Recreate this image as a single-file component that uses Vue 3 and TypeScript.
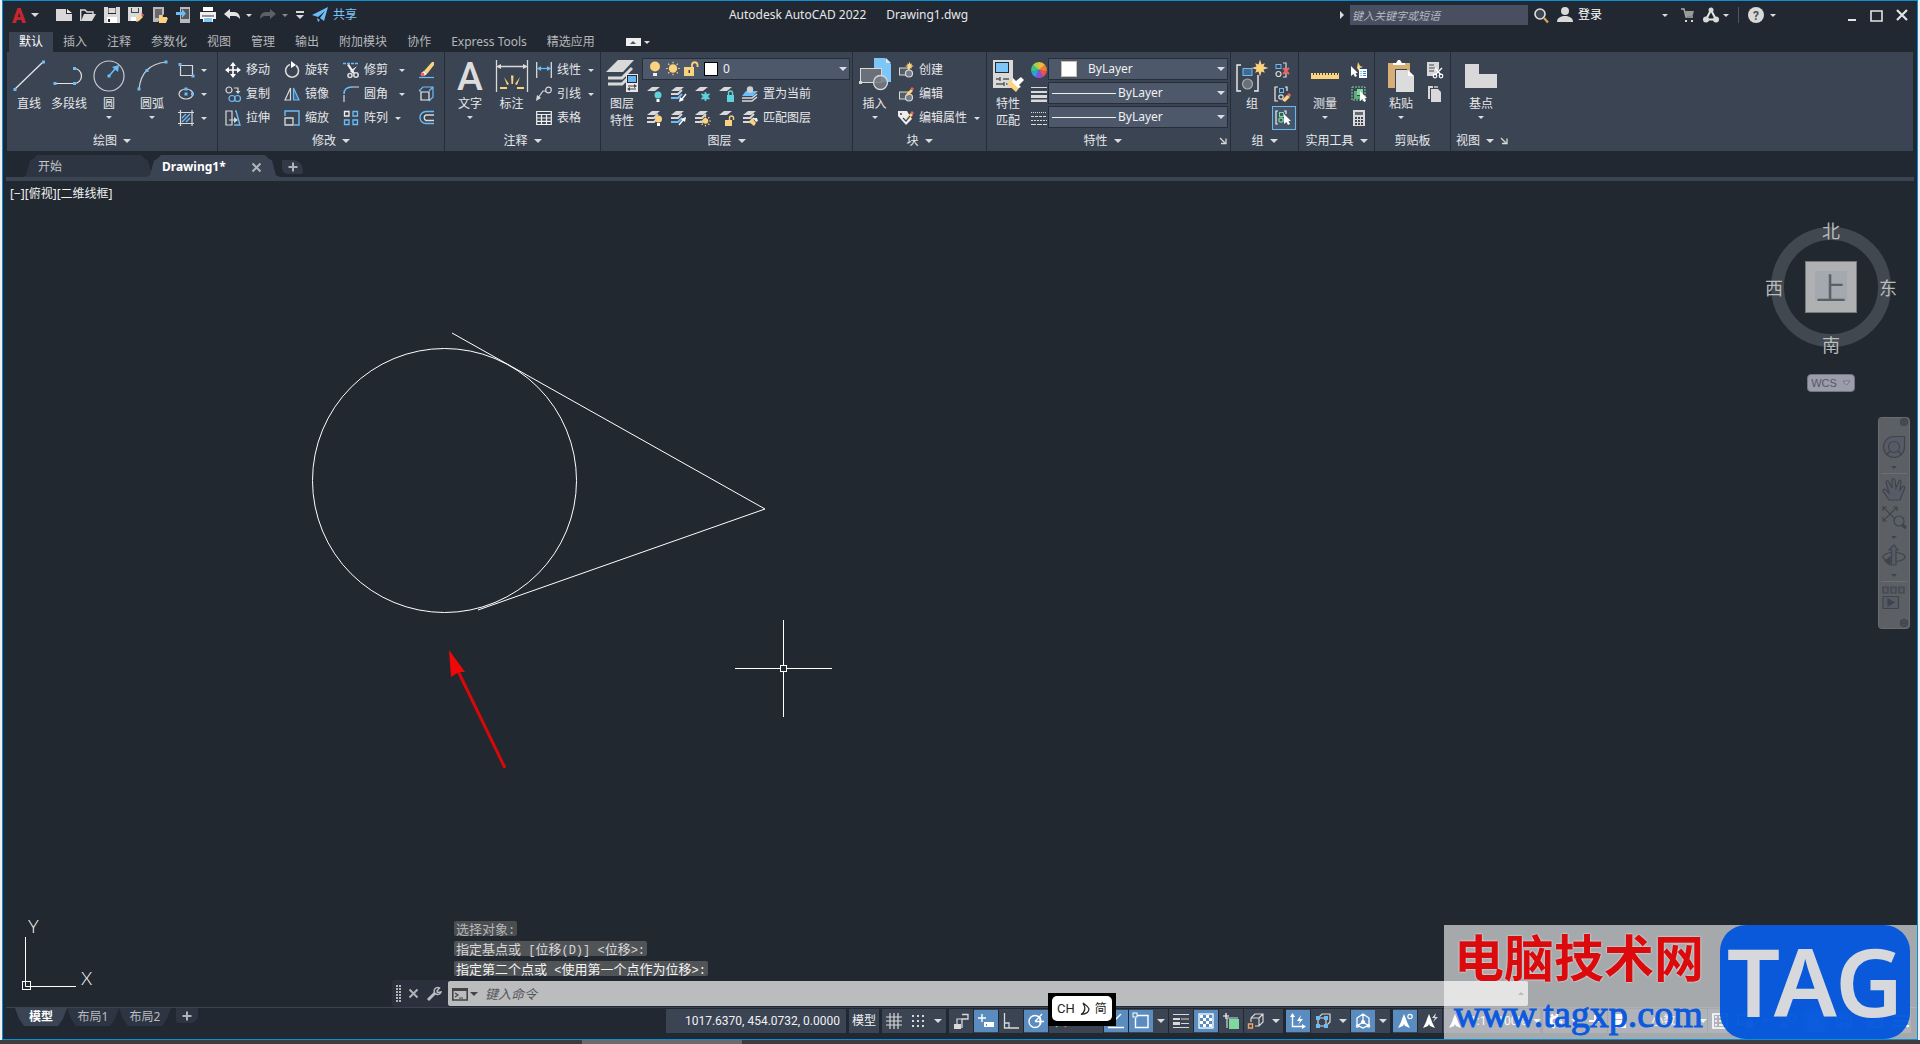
<script setup lang="ts">
import { h, ref } from 'vue'

interface Cmd { icon: string; label?: string; caret?: boolean; far?: boolean; on?: boolean }
interface Big { icon: string; label: string; second?: string; w: number; caret?: boolean }
interface Panel {
  title: string; w: number; pad: number; caret?: boolean; launcher?: boolean
  big: Big[]; cols: { w: number; items: Cmd[] }[]; kind?: 'layers' | 'props'
}
interface Status { icon?: string; icon2?: string; text?: string; w: number; caret?: boolean; on?: boolean }

const W = '#d9d9d9'
const B = '#6cbdf7'
const Y = '#fbd27d'
const G = '#7fd8a0'
const T = '#5fd3dc'

const sq = (x: number, y: number) => `<rect x="${x - 1.5}" y="${y - 1.5}" width="3" height="3" fill="${B}"/>`
const st = (d: string, c = W, w = 1.2) => `<path d="${d}" fill="none" stroke="${c}" stroke-width="${w}"/>`
const fl = (d: string, c = W) => `<path d="${d}" fill="${c}"/>`
const circ = (x: number, y: number, r: number, c = W, f = 'none', w = 1.2) =>
  `<circle cx="${x}" cy="${y}" r="${r}" fill="${f}" stroke="${c}" stroke-width="${w}"/>`
const sheet = (y: number, c = W) => fl(`M6 ${y}H14L9 ${y + 4}H1Z`, c)
const stack = (c = W) => sheet(1) + st('M1 8H8L12 4', W, 1.8) + st('M1 12H8L12 8', c, 1.8)
const pencil = fl('M8 10L9 7L13 3L15 5L11 9Z', Y) + fl('M12.500 2.500L14 1L16 3L14.500 4.500Z', '#f26060')
const blockBase = `<rect x="1.500" y="6" width="9" height="7" fill="#555c68" stroke="${W}"/>` + circ(11, 11.5, 3.5, W, '#767c86')
const star = (x: number, y: number, r: number) => {
  const p: string[] = []
  for (let i = 0; i < 16; i++) {
    const a = (i * Math.PI) / 8
    const k = i % 2 ? r * 0.45 : i % 4 ? r * 0.8 : r
    p.push(`${(x + k * Math.sin(a)).toFixed(1)},${(y - k * Math.cos(a)).toFixed(1)}`)
  }
  return `<polygon points="${p.join(' ')}" fill="${Y}"/>`
}
const sun = (x: number, y: number, r: number) => {
  let s = `<circle cx="${x}" cy="${y}" r="${r}" fill="${Y}"/>`
  for (let i = 0; i < 8; i++) {
    const a = (i * Math.PI) / 4
    s += st(`M${x + (r + 1) * Math.cos(a)} ${y + (r + 1) * Math.sin(a)}L${x + (r + 2.6) * Math.cos(a)} ${y + (r + 2.6) * Math.sin(a)}`, Y, 1.2)
  }
  return s
}
const wheel = () => {
  const c = ['#f5b73a', '#f07a3c', '#e8505b', '#8a4fe0', '#29a3dc', '#3cc28a', '#a9cf4d']
  return c.map((k, i) => {
    const a = (i * 2 * Math.PI) / 7
    const b = ((i + 1) * 2 * Math.PI) / 7
    return fl(`M8 8L${8 + 8 * Math.sin(a)} ${8 - 8 * Math.cos(a)}A8 8 0 0 1 ${8 + 8 * Math.sin(b)} ${8 - 8 * Math.cos(b)}Z`, k)
  }).join('')
}
const checker = () => {
  let s = `<rect x="1" y="1" width="14" height="14" fill="none" stroke="#fff" stroke-width="1.300"/>`
  for (let r = 0; r < 4; r++) for (let c = 0; c < 4; c++) if ((r + c) % 2 === 0) s += `<rect x="${2 + c * 3}" y="${2 + r * 3}" width="3" height="3" fill="#fff"/>`
  return s
}
const dots = () => {
  let s = ''
  for (let r = 0; r < 3; r++) for (let c = 0; c < 3; c++) s += `<rect x="${2 + c * 5}" y="${2 + r * 5}" width="2" height="2" fill="${W}"/>`
  return s
}
const cursor = (x: number, y: number) => fl(`M${x} ${y}V${y + 10}L${x + 2.5} ${y + 8}L${x + 4} ${y + 11}L${x + 6} ${y + 10}L${x + 4.500} ${y + 7}H${x + 7}Z`, '#fff')
const scalePerson = (x: number) => fl(`M${x} 1L${x + 2} 6L${x + 3} 9L${x + 6} 15L${x + 1} 13L${x} 11L${x - 1} 13L${x - 6} 15L${x - 3} 9L${x - 2} 6Z`, '#fff')

const icons: Record<string, string> = {
  logo: `<text x="1" y="16" font-family="Roboto, sans-serif" font-weight="900" font-size="20" fill="#c8262e">A</text>`,
  fileNew: fl('M0 2H10V7H16V14H0Z') + fl('M11 2L16 6H11Z', '#eee'),
  open: st('M.7 14V3H5L7 5H13V7', W, 1.4) + fl('M4 7H16L12 14H1Z'),
  save: fl('M0 0H16V16H0Z') + `<rect x="4" y="0" width="8" height="7" fill="#23292f"/><rect x="4.500" y="1" width="7" height="5" fill="${W}"/><rect x="3" y="10" width="10" height="6" fill="#fff"/><rect x="4" y="12" width="2" height="3" fill="#23292f"/>`,
  saveAs: fl('M0 0H14V8L9 14H0Z') + `<rect x="3" y="1" width="8" height="5" fill="#444"/><rect x="4" y="1" width="6" height="4" fill="${W}"/><rect x="3" y="10" width="5" height="4" fill="#fff"/>` + fl('M8 15L9 12L13 8L15 10L11 14Z', Y) + fl('M13 7L14 6L16 8L15 9.500Z', '#f26060'),
  openWeb: fl('M1 0H12V7L6 15H1Z', '#b9b9b9') + fl('M3 2H10V11H3Z', '#66696d') + fl('M7 8H10L11 10H15V11L16 11L14 16H7Z', Y),
  saveWeb: fl('M4 0H14V16H4Z', '#b9b9b9') + fl('M5 2H13V12H5Z', '#55595e') + fl('M0 5H6V2L10 6.500L6 11V8H0Z', B),
  print: fl('M3 0H13V4H3Z', '#fff') + fl('M0 5H16V12H0Z', '#eee') + fl('M3 9H13V15H3Z', '#fff') + fl('M4 11H12V15H4Z', '#85c7f7') + st('M2 9H14', '#333', 1),
  undo: fl('M0 7L6 2V5H10C14 5 16 8 16 12C14 9.500 12 9 10 9H6V12Z', '#e4e4e4'),
  redo: fl('M16 7L10 2V5H6C2 5 0 8 0 12C2 9.500 4 9 6 9H10V12Z', '#5c6167'),
  custom: fl('M0 4H8V6H0Z') + fl('M0 8H8L4 12Z'),
  plane: fl('M16 0L12 14L8 11L13 4L6 10L0 8Z', B) + fl('M5 11L8 13L6 15Z', B),
  search: circ(6, 6, 5, '#e0e0e0', '#3f4650', 1.6) + st('M10 10L14 14.500', '#d9a55f', 2.2),
  user: circ(8, 4, 4, W, W, 0) + fl('M0 15C0 11 3 10 6 9H10C13 10 16 11 16 15Z'),
  cart: st('M0 2H3L5 10H12', '#aaa', 1.4) + fl('M4 4H13L11.500 9H5Z', '#9a9a9a') + fl('M4 13H6V15H4ZM10 13H12V15H10Z'),
  app: st('M8 3L3 12.500L13 12.500Z', '#e4e4e4', 2) + circ(8, 3, 2.5, W, W, 0) + circ(3, 12.5, 3, W, W, 0) + circ(13, 12.5, 3, W, W, 0),
  help: circ(8, 8, 8, W, W, 0) + `<text x="8" y="12.500" text-anchor="middle" font-family="Roboto, sans-serif" font-weight="700" font-size="12" fill="#4a4f57">?</text>`,
  line: st('M2 29L30 2', '#e4e4e4', 1.3) + sq(2, 29.5) + sq(30.5, 2),
  poly: st('M2 23.500H21M21 8.500A7.500 7.500 0 0 1 21 23.500', '#e4e4e4') + sq(2, 23.5) + sq(21.5, 23.5) + sq(21.5, 8.5),
  circle: circ(16, 16, 15, '#c9ccd0') + st('M16 16L22 9', B, 1.6) + fl('M26 5L25 12L19 7Z', B) + sq(16, 16),
  arc: st('M3 29C4 20 6 15 11 10S21 3 30 2', '#c9ccd0') + sq(3, 29) + sq(11, 10.5) + sq(30, 2),
  rect: st('M3 3.500H14.500V13.500H2.500V4', W, 1.2) + sq(2, 2.5) + sq(15, 14),
  ellipse: `<ellipse cx="8" cy="8" rx="7" ry="5" fill="none" stroke="${W}" stroke-width="1.200"/>` + sq(8, 8) + sq(8, 3) + sq(14.5, 8),
  hatch: st('M2.500 0V16M14 0V16M0 2.500H16M0 13.500H16') + st('M4 8L8 4M4 12L12 4M8 12L12 8', B, 1.4),
  move: st('M8 2V14M2 8H14', '#fff', 1.6) + fl('M8 0L11 4H5ZM8 16L11 12H5ZM0 8L4 5V11ZM16 8L12 5V11Z', '#fff'),
  rotate: st('M6 2.500A6.500 6.500 0 1 0 12 3.500', W, 1.6) + fl('M7 -1L12 3L7 6Z', '#fff'),
  trim: `<path d="M0 1.500H16" stroke="${B}" stroke-width="1.500" stroke-dasharray="3 1"/>` + fl('M4 3L6 2L12 11L10 12ZM14 4L9 11L7 9Z', '#eee') + circ(13, 13, 2.2, W, 'none', 1.6) + circ(7, 13.5, 2, W, 'none', 1.6),
  copy: circ(4, 4, 3) + st('M9 2H13V5') + fl('M10.500 5H15.500L13 8Z') + circ(7, 12.5, 3, B) + circ(12.5, 12.5, 3, B),
  mirror: st('M6.500 2V14H1Z', W) + `<path d="M9.500 2V14H15Z" fill="#46688c" stroke="${B}" stroke-width="1.200"/>`,
  fillet: st('M1 16V9M9 1H16', W) + st('M1 8C1 3 4 1 9 1', B, 1.4),
  stretch: st('M1 1H7V15H1ZM4 10H10', W) + fl('M9 7L13 10L9 13Z') + st('M10 1H11L15 15H9', B, 1.4),
  scale: st('M1 6V1H15V15H10', B, 1.4) + st('M1 8H9V15H1Z', W, 1.3),
  array: st('M1.500 1.500H6V6H1.500Z', '#eee', 1.3) + st('M10 1.500H14.500V6H10ZM1.500 10H6V14.500H1.500ZM10 10H14.500V14.500H10Z', B, 1.3),
  erase: st('M1 15.500H16', B, 1.2) + fl('M6 9L14 0H16V3L9 12Z', Y) + fl('M3 11L6 9L9 12L6 14Z', '#fff') + circ(4.5, 12.5, 2, '#f26060', '#f26060', 0),
  explode: st('M1 5L5 1H15V11L11 15M1 5H3M11 5L15 1', B) + st('M3 6H11V14H3Z', '#eee'),
  offset: st('M16 1.500H8A6 6 0 0 0 8 13.500H16', B, 1.4) + st('M16 5H8A3 3 0 0 0 8 10.500H16', W, 1.4),
  text: `<text x="16" y="30" text-anchor="middle" font-family="Roboto, sans-serif" font-weight="500" font-size="39" fill="#dcdcdc">A</text>`,
  dim: st('M.5 0V32M31.500 0V32M2 6.500H30', W, 1.3) + fl('M0 6.500L5 4V9ZM32 6.500L27 4V9Z') + fl('M15 15.500H17.500L17 24H15.500ZM8 17L13 24L11 25ZM24 17L19 24L21 25ZM4 29L4 27L11 27V29ZM28 29V27L21 27V29Z', Y),
  linear: st('M.7 0V16M15.300 0V16', W, 1.3) + st('M2 6.500H14', B) + fl('M1 6.500L5 4V9ZM15 6.500L11 4V9Z', B),
  leader: circ(12.5, 4, 2.8) + st('M10 5H7L2 12') + fl('M0 15L1 9L5 12Z'),
  table: st('M.7 1.500H15.300V14.500H.7ZM.7 4.500H15.300M.7 8H15.300M.7 11.300H15.300M5.500 4.500V14.500M10.500 4.500V14.500', '#eee'),
  layerProps: fl('M12 0H28L17 12H0Z') + st('M2 18H16L26 8', W, 3) + st('M2 24H16L24 16', W, 3) + `<rect x="20" y="14" width="12" height="18" fill="#e8e8e8"/><rect x="21.500" y="15.500" width="9" height="7" fill="#66b6f3" stroke="#23292f"/>` + st('M22 26H29M30 29H23', '#444') + fl('M28 24L31 26L28 28ZM24 27V31L21 29Z', '#444'),
  l1: sheet(1) + circ(12, 9, 3.5, T, T, 0) + fl('M10.500 13H13.500V16H10.500Z', '#fff'),
  l2: stack(B) + st('M16 8L12 13', '#fff', 1.4) + fl('M9 16L10 11L14 14Z', '#fff'),
  l3: sheet(1) + st('M11.500 6V15M7.500 8L15.500 13M15.500 8L7.500 13', T, 1.6) + circ(11.5, 10.5, 2.5, T),
  l4: sheet(1) + fl('M9 9H16V16H9Z', T) + st('M10.500 9V7A2 2 0 0 1 14.500 7V9', T, 1.4),
  l5: fl('M4 5H16L11 10H0Z', B) + st('M0 12H10L15 8M0 15H10L15 11', W, 1.6) + circ(8, 3.5, 3.2, W, '#cfcfcf', 0),
  l6: stack() + circ(12.5, 9, 3.5, Y, Y, 0) + fl('M11 13H14V16H11Z', '#fff'),
  l7: stack(B) + st('M9 15L13 10', '#fff', 1.4) + fl('M16 7L15 12L11 9Z', '#fff'),
  l8: stack() + sun(11.5, 11, 2.8),
  l9: sheet(1) + fl('M7 10H14V16H7Z', Y) + st('M11.500 10V8A2 2 0 0 1 15.500 8V10', Y, 1.4),
  l10: stack() + fl('M7 12L10 8L14 13L12 16Z', Y) + fl('M11 8L15 8L16 11L14 12Z', '#eee'),
  bulb: circ(8, 5.5, 5, Y, Y, 0) + fl('M6 12H10V15H6Z', '#eee'),
  sun: sun(8, 7.5, 4.2),
  unlock: fl('M1 6H11V15H1Z', Y) + st('M9 6V3.500A2.800 2.800 0 0 1 14.500 3.500V6', Y, 1.8) + fl('M5.500 9H7V12H5.500Z', '#3b4453'),
  insert: fl('M15 -2H26L32 4V22H15Z', '#7cc6f8') + fl('M27 -2L32 3H27Z', '#cfe8fb') + `<rect x="1.500" y="8.500" width="21" height="14" fill="#6a707a" stroke="${W}"/>` + circ(21.5, 22.5, 7, W, 'rgba(120,125,133,.85)', 1.3) + fl('M0 21H3V24H0Z'),
  create: blockBase + star(11.5, 4, 4.5),
  edit: blockBase + pencil,
  attr: fl('M0 1H9L14 9L8 15L0 6Z', '#eee') + circ(3, 4, 1, '#3b4453', '#3b4453', 0) + pencil + st('M5 8L8 11L12 6', '#3b4453', 1.2),
  match: fl('M1 0H21V28H1Z') + `<rect x="3.500" y="2.500" width="13" height="10" fill="#7cc6f8" stroke="#23292f"/>` + st('M4 19H8M11 19H17M4 24H12M14 24H16M8 17V21M12 22V26', '#555', 1.4) + fl('M15 24L20 19L28 27L24 32Z', Y) + fl('M21 18L24 21L29 17L32 20L27 25L29 27L26 28L20 22Z', '#fff'),
  wheel: wheel(),
  lweight: fl('M0 1H16V2H0ZM0 5H16V7H0ZM0 9H16V12H0ZM0 13.500H16V16H0Z'),
  ltype: `<path d="M0 2.500H16" stroke="${W}" stroke-dasharray="1 1"/><path d="M0 6.500H16" stroke="${W}" stroke-dasharray="3 1"/><path d="M0 10.500H16" stroke="${W}" stroke-dasharray="2 1"/><path d="M0 14.500H16" stroke="${W}" stroke-dasharray="5 1"/>`,
  group: st('M5 5H1V31H5M18 31H22V15', '#eee', 1.4) + `<rect x="7" y="8.500" width="9" height="7" fill="#46688c" stroke="${B}"/>` + circ(11.5, 24, 5, '#aaa', '#6a707a') + star(24, 8, 8.5),
  ungroup: `<rect x="1" y="2.500" width="5" height="4" fill="none" stroke="${B}"/>` + circ(3.5, 12, 2.5) + st('M8 1H11V15H8') + st('M8 6L14 12M14 6L8 12', '#f26060', 2),
  groupEdit: st('M3 1H0V15H3M10 1H12V5', '#eee') + `<rect x="4.500" y="2.500" width="4" height="4" fill="none" stroke="${B}"/>` + circ(6, 11, 2.2) + fl('M7 14L12 9L15 11L10 16Z', Y) + fl('M12 9L14 7L16 9L15 11Z', '#f26060'),
  groupSel: st('M3 1H1V14H3M9 1H11V4', '#eee') + `<rect x="4.500" y="2.500" width="4" height="4" fill="none" stroke="${G}"/>` + circ(6, 10, 2.2, G) + cursor(9, 4),
  ruler: `<rect x="2" y="13" width="28" height="6" fill="${Y}"/>` + [4, 7, 10, 13, 16, 19, 22, 25, 28].map(x => `<rect x="${x}" y="13" width="1" height="2" fill="#3b4453"/>`).join(''),
  quick: fl('M7 0L9 4L12 5L9 6L8 9L6 6Z', Y) + cursor(0, 4) + fl('M8 7H16V16H8Z', '#fff') + st('M9.500 9.500H10.500M12 9.500H15M9.500 11.500H10.500M12 11.500H15M9.500 13.500H10.500M12 13.500H15', '#2d8fe0'),
  selAll: `<rect x="1" y="1" width="13" height="13" fill="none" stroke="${G}" stroke-dasharray="2 1"/>` + fl('M3 5H6V10H10V13H3Z', '#5fae80') + fl('M6 3H12V9H6Z', G) + cursor(9, 5),
  calc: fl('M2 0H14V16H2Z') + fl('M4 2H12V5H4Z', '#66696d') + [4, 7, 10].map(x => [7, 10, 13].map(y => `<rect x="${x}" y="${y}" width="2" height="2" fill="#44484e"/>`).join('')).join(''),
  paste: fl('M3 3H25V28H3Z', '#d9ae74') + fl('M8 3H11L13 0H15L17 3H20V5H8Z', '#fff') + fl('M11 10H22L29 16V32H11Z', '#dcdcdc') + st('M10.500 32V9.500H22', '#3b4453', 1) + fl('M23 10L29 16H23Z', '#fff'),
  cut: fl('M0 0H12V7L7 14H0Z') + st('M2 3H7M2 6H8M2 9H7', '#44484e') + st('M8 6L14 13M15 6L8 13', '#fff', 1.4) + circ(14, 14, 1.8, '#fff') + circ(8, 14, 1.8, '#fff'),
  copyClip: fl('M1 0H6V2H3V13H1Z') + fl('M4 3H11L14 6V16H4Z') + fl('M7 0L11 0L11 2H7Z', '#aaa'),
  base: fl('M0 4H14V14H32V28H0Z'),
  launch: st('M1 1L6 6', W, 1.3) + st('M7 1.500V6.500H2', W, 1.3),
  grid: st('M4 0V16M8 0V16M12 0V16M0 4H16M0 8H16M0 12H16'),
  snap: dots(),
  infer: fl('M1 11H8V16H1Z') + st('M9 1.500H15V6H9V15', W, 1.3) + st('M4 11V6H9'),
  dyn: st('M0 5H8M4 1V9', '#fff', 1.4) + fl('M6 9H16V14H6Z', '#fff') + fl('M8 11H9V13H8Z', '#5b8cc0'),
  ortho: st('M1.500 0V15H16M2 10H6V15', W, 1.3),
  polar: circ(7, 8.5, 6, '#fff', 'none', 1.4) + st('M7 8.500L14 1M7 8.500H16M12 4V12', '#fff', 1.3),
  iso: st('M3 14L13 3', '#6bd17b', 1.4) + st('M3 3L13 14', '#f26060', 1.4),
  otrack: st('M1 13L13 1M0 14.500H16', '#fff', 1.4),
  osnap: st('M3 2.500H15V14.500H2.500V5', '#fff', 1.4) + `<rect x="0" y="0" width="4" height="4" fill="#5b8cc0" stroke="#fff"/>`,
  lw: fl('M0 1H16V2H0ZM0 5H7V7H0ZM8 5.500H16V6.500H8ZM0 9H7V12H0ZM8 10H16V11H8ZM0 14H16V15H0Z'),
  trans: checker(),
  cycle: st('M0 3H6M3 0V6', '#fff') + st('M4 15V5H15', W) + fl('M6 6H16V16H6Z', G),
  osnap3d: st('M3 5L7 1H15V9L11 13H7M3 5V9M3 5H11V13M11 5L15 1', W) + st('M.5 11H4.500V15H.5Z', '#f2a36b', 1.4),
  ucs: st('M2.500 2V13.500H14', '#fff', 1.4) + fl('M2.500 0L5 4H0ZM16 13.500L12 11V16ZM11 2L7 8H10L8 12L13 6H10Z', '#fff'),
  filter: st('M3 5L7 1H15V9L11 13M3 5H11V13H3Z', W) + fl('M1 3H5V7H1ZM9 3H13V7H9ZM1 11H5V15H1ZM9 11H13V15H9Z', B),
  gizmo: st('M8 1L14 5V12L8 15L2 12V5ZM8 1V9M8 9L2 13M8 9L14 13', '#fff', 1.3) + circ(8, 9, 1.5, '#fff', '#fff') + circ(2.5, 13, 1.2, '#fff') + circ(13.5, 13, 1.2, '#fff'),
  annoVis: scalePerson(7) + circ(13, 3.5, 2.2, '#fff'),
  annoAuto: scalePerson(7) + fl('M14 0L10 5H13L11 9L16 4H13Z'),
  annoScale: scalePerson(8),
  gear: circ(8, 8, 4, '#fff', 'none', 3) + `<circle cx="8" cy="8" r="6.500" fill="none" stroke="#fff" stroke-width="2" stroke-dasharray="2.500 2.600"/>`,
  plus: st('M8 2V14M2 8H14', '#fff', 2),
  units: fl('M3 1H13V6H3ZM2 7H14V15H2Z', '#fff'),
  list: st('M1 1H15V15H1ZM3 4H5M7 4H13M3 8H5M7 8H13M3 12H5M7 12H13', '#fff', 1.6),
  lockui: st('M8 11H1V2H15V6', '#fff', 1.3) + fl('M9 9H16V15H9Z', '#fff') + st('M10.500 9V7A2 2 0 0 1 14.500 7V9', '#fff'),
  isolate: st('M1 1H7V7H1ZM4 10L8 15H1Z', '#fff') + circ(12, 5, 3.5, '#fff'),
  accel: circ(8, 8, 7, '#fff') + st('M4 8L7 11L12 5', '#fff'),
  printer: st('M4 5V1H12V5M1 5H15V12H1ZM4 10H12V15H4Z', '#fff'),
  full: st('M1 2H15V14H1ZM4 11L12 5M9 5H12V8M4 8V11H7', '#fff', 1.3),
  menu: fl('M0 2H16V4H0ZM0 7H16V9H0ZM0 12H16V14H0Z', '#fff'),
  cmd: st('M.8 2.800H15.200V14H.8Z', '#444', 1.6) + fl('M0 2H16V5H0Z', '#444') + st('M3 7L6 9L3 11M7 12H11', '#444', 1.2),
  wrench: st('M2 14L9 7', '#b8bbc0', 3) + st('M13.500 2A3.500 3.500 0 1 0 15 6L11.500 6.500L11 5Z', '#b8bbc0', 1.5),
  grip: [0, 3].map(x => [0, 3, 6, 9, 12, 15].map(y => `<rect x="${x}" y="${y}" width="2" height="2" fill="#b3b6bb"/>`).join('')).join(''),
  x12: st('M1.500 1.500L9.500 9.500M9.500 1.500L1.500 9.500', '#b0b3b8', 2),
  p12: st('M6 1.500V10.500M1.500 6H10.500', '#b0b3b8', 2),
  min: fl('M0 10H8V12H0Z', '#e4e4e4'),
  max: st('M1 2H12V12H1Z', '#e4e4e4', 1.6),
  close: st('M1 1L11 11M11 1L1 11', '#e4e4e4', 2.2),
}

const Icon = (p: { n: string; w?: number; h?: number }) => {
  const w = p.w ?? 16
  const hh = p.h ?? w
  return h('svg', { width: w, height: hh, viewBox: `0 0 ${w} ${hh}`, 'aria-hidden': 'true', overflow: 'visible', innerHTML: icons[p.n] })
}
Icon.props = ['n', 'w', 'h']

const quickAccess = ['fileNew', 'open', 'save', 'saveAs', 'openWeb', 'saveWeb', 'print']
const ribbonTabs = ['默认', '插入', '注释', '参数化', '视图', '管理', '输出', '附加模块', '协作', 'Express Tools', '精选应用']
const activeTab = ref('默认')
const keyword = ref('')
const command = ref('')

const panels: Panel[] = [
  {
    title: '绘图', w: 210, pad: 2, caret: true,
    big: [{ icon: 'line', label: '直线', w: 40 }, { icon: 'poly', label: '多段线', w: 40 }, { icon: 'circle', label: '圆', w: 40, caret: true }, { icon: 'arc', label: '圆弧', w: 46, caret: true }],
    cols: [{ w: 38, items: [{ icon: 'rect', caret: true }, { icon: 'ellipse', caret: true }, { icon: 'hatch', caret: true }] }],
  },
  {
    title: '修改', w: 226, pad: 4, caret: true, big: [],
    cols: [
      { w: 59, items: [{ icon: 'move', label: '移动' }, { icon: 'copy', label: '复制' }, { icon: 'stretch', label: '拉伸' }] },
      { w: 59, items: [{ icon: 'rotate', label: '旋转' }, { icon: 'mirror', label: '镜像' }, { icon: 'scale', label: '缩放' }] },
      { w: 75, items: [{ icon: 'trim', label: '修剪', caret: true, far: true }, { icon: 'fillet', label: '圆角', caret: true, far: true }, { icon: 'array', label: '阵列', caret: true }] },
      { w: 24, items: [{ icon: 'erase' }, { icon: 'explode' }, { icon: 'offset' }] },
    ],
  },
  {
    title: '注释', w: 155, pad: 5, caret: true,
    big: [{ icon: 'text', label: '文字', w: 40, caret: true }, { icon: 'dim', label: '标注', w: 43 }],
    cols: [{ w: 66, items: [{ icon: 'linear', label: '线性', caret: true }, { icon: 'leader', label: '引线', caret: true }, { icon: 'table', label: '表格' }] }],
  },
  { title: '图层', w: 251, pad: 1, caret: true, big: [{ icon: 'layerProps', label: '图层', second: '特性', w: 40 }], cols: [], kind: 'layers' },
  {
    title: '块', w: 133, pad: 1, caret: true,
    big: [{ icon: 'insert', label: '插入', w: 41, caret: true }],
    cols: [{ w: 90, items: [{ icon: 'create', label: '创建' }, { icon: 'edit', label: '编辑' }, { icon: 'attr', label: '编辑属性', caret: true }] }],
  },
  {
    title: '特性', w: 243, pad: 1, caret: true, launcher: true,
    big: [{ icon: 'match', label: '特性', second: '匹配', w: 40 }],
    cols: [{ w: 20, items: [{ icon: 'wheel' }, { icon: 'lweight' }, { icon: 'ltype' }] }], kind: 'props',
  },
  {
    title: '组', w: 67, pad: 1, caret: true, big: [{ icon: 'group', label: '组', w: 40 }],
    cols: [{ w: 24, items: [{ icon: 'ungroup' }, { icon: 'groupEdit' }, { icon: 'groupSel', on: true }] }],
  },
  {
    title: '实用工具', w: 75, pad: 3, caret: true, big: [{ icon: 'ruler', label: '测量', w: 46, caret: true }],
    cols: [{ w: 24, items: [{ icon: 'quick' }, { icon: 'selAll' }, { icon: 'calc' }] }],
  },
  {
    title: '剪贴板', w: 75, pad: 3, big: [{ icon: 'paste', label: '粘贴', w: 46, caret: true }],
    cols: [{ w: 24, items: [{ icon: 'cut' }, { icon: 'copyClip' }] }],
  },
  { title: '视图', w: 60, pad: 9, caret: true, launcher: true, big: [{ icon: 'base', label: '基点', w: 42, caret: true }], cols: [] },
]
const layerTools = [['l1', 'l2', 'l3', 'l4'], ['l6', 'l7', 'l8', 'l9']]
const layerActions = [{ icon: 'l5', label: '置为当前' }, { icon: 'l10', label: '匹配图层' }]
const propNames = ['颜色', '线宽', '线型']

const history = ['选择对象:', '指定基点或 [位移(D)] <位移>:', '指定第二个点或 <使用第一个点作为位移>:']
  .map(t => t.split(/([\x20-\x7e]+)/).filter(Boolean).map(s => ({ s, half: /^[\x20-\x7e]/.test(s) })))

const status: Status[][] = [
  [{ text: '1017.6370, 454.0732, 0.0000', w: 180 }],
  [{ text: '模型', w: 30 }],
  [{ icon: 'grid', icon2: 'snap', w: 64, caret: true }],
  [
    { icon: 'infer', w: 24 }, { icon: 'dyn', w: 24, on: true }, { icon: 'ortho', w: 24 }, { icon: 'polar', w: 24, on: true },
    { icon: 'iso', w: 54, caret: true }, { icon: 'otrack', w: 24, on: true }, { icon: 'osnap', w: 39, on: true, caret: true },
    { icon: 'lw', w: 24 }, { icon: 'trans', w: 24, on: true }, { icon: 'cycle', w: 24 }, { icon: 'osnap3d', w: 39, caret: true },
  ],
  [{ icon: 'ucs', w: 24, on: true }, { icon: 'filter', w: 39, caret: true }, { icon: 'gizmo', w: 39, on: true, caret: true }],
  [{ icon: 'annoVis', w: 24, on: true }, { icon: 'annoAuto', w: 24 }, { icon: 'annoScale', text: '1:1 / 100%', w: 97, caret: true }],
  [
    { icon: 'gear', w: 39, caret: true }, { icon: 'plus', w: 24 }, { icon: 'units', text: '小数', w: 99, caret: true },
    { icon: 'list', w: 24 }, { icon: 'lockui', w: 39, caret: true }, { icon: 'isolate', w: 30 }, { icon: 'accel', w: 24, on: true },
    { icon: 'printer', w: 30 }, { icon: 'full', w: 30 }, { icon: 'menu', w: 20 },
  ],
]
</script>

<template>
  <div class="desktop">
    <div class="window">
      <header class="titlebar">
        <div class="quick">
          <button class="app-menu" aria-label="应用程序"><Icon n="logo" /><i class="caret wide" /></button>
          <button v-for="q in quickAccess" :key="q" :aria-label="q"><Icon :n="q" /></button>
          <button class="split" aria-label="放弃"><Icon n="undo" /><i class="caret" /></button>
          <button class="split dim" aria-label="重做"><Icon n="redo" /><i class="caret" /></button>
          <button aria-label="自定义"><Icon n="custom" :w="8" :h="16" /></button>
          <button class="share"><Icon n="plane" />共享</button>
        </div>
        <h1 class="title"><span>Autodesk AutoCAD 2022</span><span>Drawing1.dwg</span></h1>
        <div class="account">
          <i class="caret right" />
          <input v-model="keyword" class="search" type="text" aria-label="搜索" placeholder="键入关键字或短语">
          <button class="find" aria-label="查找"><Icon n="search" :w="14" /></button>
          <button class="login"><Icon n="user" />登录<i class="caret" /></button>
          <button class="cart" aria-label="商店"><Icon n="cart" :w="13" :h="16" /></button>
          <button class="split apps" aria-label="应用"><Icon n="app" /><i class="caret" /></button>
          <button class="split help" aria-label="帮助"><Icon n="help" /><i class="caret" /></button>
        </div>
        <div class="winctl">
          <button aria-label="最小化"><Icon n="min" :w="8" :h="12" /></button>
          <button aria-label="最大化"><Icon n="max" :w="12" /></button>
          <button aria-label="关闭"><Icon n="close" :w="12" /></button>
        </div>
      </header>

      <nav class="ribbon-tabs">
        <button v-for="t in ribbonTabs" :key="t" :class="{ active: t === activeTab }" @click="activeTab = t">{{ t }}</button>
        <button class="collapse" aria-label="最小化功能区"><span class="box"><i class="caret up" /></span><i class="caret" /></button>
      </nav>

      <section class="ribbon">
        <div v-for="p in panels" :key="p.title" class="panel" :style="{ width: p.w + 'px' }">
          <div class="body" :style="{ paddingLeft: p.pad + 'px' }">
            <button v-for="b in p.big" :key="b.icon" class="big" :style="{ width: b.w + 'px' }">
              <Icon :n="b.icon" :w="32" />
              <span>{{ b.label }}</span>
              <span v-if="b.second">{{ b.second }}</span>
              <i v-if="b.caret" class="caret" />
            </button>
            <div v-for="(c, i) in p.cols" :key="i" class="col" :style="{ width: c.w + 'px' }">
              <button v-for="m in c.items" :key="m.icon" class="small" :class="{ on: m.on, far: m.far }" :aria-label="m.label ?? m.icon">
                <Icon :n="m.icon" /><span v-if="m.label">{{ m.label }}</span><i v-if="m.caret" class="caret" />
              </button>
            </div>
            <div v-if="p.kind === 'layers'" class="fill">
              <div class="combo layer">
                <Icon n="bulb" /><Icon n="sun" /><Icon n="unlock" /><b class="swatch small-sw" />
                <select aria-label="图层"><option>0</option></select><i class="caret wide" />
              </div>
              <div v-for="(row, i) in layerTools" :key="i" class="tools">
                <button v-for="t in row" :key="t" :aria-label="t"><Icon :n="t" /></button>
                <button class="named"><Icon :n="layerActions[i].icon" />{{ layerActions[i].label }}</button>
              </div>
            </div>
            <div v-if="p.kind === 'props'" class="fill">
              <div v-for="(n, i) in propNames" :key="n" class="combo">
                <b v-if="i === 0" class="swatch" /><b v-else class="rule" />
                <select :aria-label="n"><option>ByLayer</option></select><i class="caret wide" />
              </div>
            </div>
          </div>
          <div class="caption" :class="{ launchable: p.launcher }">
            <span>{{ p.title }}</span><i v-if="p.caret" class="caret wide" />
            <button v-if="p.launcher" class="launcher" aria-label="对话框"><Icon n="launch" :w="8" /></button>
          </div>
        </div>
      </section>

      <nav class="doc-tabs">
        <div class="doc"><button>开始</button></div>
        <div class="doc current"><button>Drawing1*</button><button class="x" aria-label="关闭图形"><Icon n="x12" :w="11" /></button></div>
        <button class="add" aria-label="新图形"><Icon n="p12" :w="12" /></button>
      </nav>

      <main class="canvas">
        <p class="viewport-label">[−][俯视][二维线框]</p>
        <svg class="drawing" width="900" height="800" viewBox="3 181 900 800" aria-hidden="true">
          <g fill="none" stroke="#fff" stroke-width="1">
            <circle cx="444.500" cy="480.500" r="132" />
            <path d="M452 333L765 509L478 610" />
            <path d="M735 668.500H780M787 668.500H832M783.500 620V665M783.500 672V717" />
            <rect x="780.500" y="665.500" width="6" height="6" />
          </g>
          <path d="M505 768L458 671" stroke="#d80808" stroke-width="3" />
          <path d="M449 650L465 672L459 672L451 677Z" fill="#f00808" />
        </svg>

        <div class="cube">
          <span class="n">北</span><span class="w">西</span>
          <div class="face"><b>上</b></div>
          <span class="e">东</span><span class="s">南</span>
        </div>
        <button class="wcs">WCS <svg width="9" height="6" viewBox="0 0 9 6" aria-hidden="true"><path d="M1 1H8L4.500 5Z" fill="#a9abba" stroke="#72748a" /></svg></button>

        <svg class="navbar" width="32" height="212" viewBox="0 0 32 212" aria-hidden="true">
          <rect x=".5" y=".5" width="31" height="211" rx="3" fill="#5c6065" stroke="#686c70" />
          <g fill="none" stroke="#3f444c" stroke-width="1.200">
            <circle cx="26" cy="5" r="3.500" fill="#4b4f55" /><path d="M24.500 3.500L27.500 6.500M27.500 3.500L24.500 6.500" />
            <path d="M16 19.500H26.500V30A10.500 10.500 0 1 1 16 19.500Z" fill="#565b65" /><circle cx="16" cy="30" r="5.500" /><path d="M8.500 38L12 34M23.500 38L20 34" />
            <path d="M3 56.500H29M3 164.500H29" stroke="#6c7074" />
            <path d="M11 83L5 74Q5 71 8 73L11 76L8 65Q9 62 11 65L14 71L14 63Q15 60 17 63L18 71L21 64Q23 62 23 65L22 73L25 69Q28 69 26 73L22 83Z" fill="#565b65" />
            <path d="M5 90L19 104M19 90L5 104M5 94V90H9M15 90H19V94M5 100V104H9" /><circle cx="21" cy="104" r="5" fill="#5c6065" /><path d="M24.500 108L28 111" stroke-width="3" />
            <ellipse cx="16" cy="140" rx="11" ry="4.500" /><path d="M13.500 148V133H11L16 128L20 133H18V148Z" fill="#565b65" /><path d="M7 144L12 140V148Z" fill="#3f444c" />
            <path d="M5 170H10V176H5ZM13 170H18V176H13ZM21 170H26V176H21ZM5 179.500H20.500V191.500H5Z" fill="#565b65" /><path d="M10 182L16 185.500L10 189Z" fill="#3f444c" />
            <circle cx="26" cy="206" r="3.500" fill="#4b4f55" /><path d="M24 206H28" />
          </g>
          <path d="M13 49H19L16 52ZM13 119H19L16 122ZM13 157H19L16 160Z" fill="#3f444c" />
        </svg>

        <svg class="ucs" width="80" height="80" viewBox="0 -8 80 80" aria-hidden="true">
          <path d="M3.500 18V67.500H54" fill="none" stroke="#fff" />
          <rect x=".5" y="62.500" width="8" height="8" fill="none" stroke="#fff" />
          <text x="6" y="14">Y</text><text x="59" y="66">X</text>
        </svg>

        <div class="command">
          <div class="history">
            <p v-for="(l, i) in history" :key="i" :class="'age' + i"><span v-for="(g, k) in l" :key="k" :class="{ half: g.half }">{{ g.s }}</span></p>
          </div>
          <div class="cmdline">
            <div class="handle"><Icon n="grip" :w="5" :h="17" /><button aria-label="关闭命令行"><Icon n="x12" :w="11" /></button><button class="tool" aria-label="自定义命令行"><Icon n="wrench" /></button></div>
            <label class="entry"><Icon n="cmd" /><i class="caret wide" /><input v-model="command" type="text" aria-label="命令" placeholder="键入命令"><i class="caret up" /></label>
          </div>
        </div>
      </main>

      <footer class="bottom">
        <nav class="layouts">
          <button class="active">模型</button><button>布局1</button><button>布局2</button>
          <button class="add" aria-label="新建布局"><Icon n="p12" :w="12" /></button>
        </nav>
        <div class="status">
          <div v-for="(g, i) in status" :key="i" class="sgroup">
            <button v-for="(s, k) in g" :key="k" :style="{ width: s.w + 'px' }" :aria-label="s.text ?? s.icon">
              <span v-if="s.icon" class="cell" :class="{ on: s.on, fixed: s.caret || s.text }"><Icon :n="s.icon" /></span>
              <span v-if="s.icon2" class="cell fixed"><Icon :n="s.icon2" /></span>
              <span v-if="s.text" class="stext">{{ s.text }}</span>
              <i v-if="s.caret" class="caret wide" />
            </button>
          </div>
        </div>
      </footer>

      <aside class="ime"><div><span>CH</span><svg width="12" height="14" viewBox="0 0 12 14" aria-hidden="true"><path d="M4 1C7 3 9 4 10 7C10 10 7 12 2 12.500C6 10 7 6 4 1Z" fill="none" stroke="#222" stroke-width="1.200" /></svg><span>简</span></div></aside>

      <aside class="watermark">
        <div class="site"><strong>电脑技术网</strong><a href="#">www.tagxp.com</a></div>
        <div class="badge">TAG</div>
      </aside>
    </div>
    <div class="taskbar"><span /></div>
  </div>
</template>

<style>
body { margin: 0; background: #e9edf0; }
</style>

<style scoped>
.desktop { display: flex; flex-direction: column; min-height: 100vh; font: 12px/16px "Noto Sans", "Noto Sans CJK SC", sans-serif; color: #e6e7e9; background: #eef0f1; }
.window { position: relative; flex: 1; display: flex; flex-direction: column; margin: 0 2px; border: 1px solid #0a90d2; background: #222831; }
button { display: flex; align-items: center; justify-content: center; padding: 0; border: 0; background: none; color: inherit; font: inherit; white-space: nowrap; }
svg { display: block; flex: none; }
p, h1 { margin: 0; font-weight: 400; }
.caret { flex: none; width: 0; height: 0; border: 3px solid transparent; border-top-color: #dcdcdc; border-bottom: 0; }
.caret.wide { border-width: 4px 4px 0; }
.caret.up { border: 3px solid transparent; border-top: 0; border-bottom-color: #555; }
.caret.right { border: 4px solid transparent; border-left-color: #dcdcdc; border-right: 0; }

.titlebar { display: flex; align-items: center; height: 31px; padding-bottom: 3px; box-sizing: border-box; }
.quick { display: flex; align-items: center; gap: 8px; padding-left: 8px; }
.app-menu { gap: 4px; margin-right: 9px; }
.split { gap: 6px; }
.dim .caret { border-top-color: #85888c; }
.share { gap: 5px; color: #7cc4f4; }
.title { flex: 1; display: flex; justify-content: center; gap: 20px; font-size: 12px; }
.account { display: flex; align-items: center; }
.search { width: 178px; height: 20px; box-sizing: border-box; margin-left: 6px; padding: 0 2px; border: 0; border-radius: 0; background: #474f61; color: #fff; font: italic 11px/16px "Noto Sans", "Noto Sans CJK SC", sans-serif; }
.search::placeholder { color: #b5b8c0; }
.find { margin-left: 6px; }
.login { margin-left: 9px; gap: 5px; color: #fff; }
.login .caret { margin-left: 55px; }
.cart { margin-left: 13px; }
.apps { margin-left: 9px; gap: 4px; padding-right: 9px; border-right: 1px solid #4d5462; }
.help { margin-left: 9px; }
.winctl { display: flex; align-items: center; gap: 14px; margin-left: 72px; padding-right: 9px; }

.ribbon-tabs { display: flex; height: 20px; padding-left: 6px; color: #b4b7bb; }
.ribbon-tabs button { padding: 0 10px; }
.ribbon-tabs .active { background: #3b4453; color: #fff; }
.ribbon-tabs .collapse { padding-left: 21px; gap: 3px; }
.box { display: flex; align-items: center; justify-content: center; width: 15px; height: 8px; background: #eee; }

.ribbon { display: flex; height: 99px; margin: 0 4px; background: #3b4453; }
.panel { display: flex; flex-direction: column; border-right: 1px solid #262d36; }
.panel:last-child { border-right: 0; }
.body { display: flex; height: 79px; padding-top: 6px; box-sizing: border-box; }
.big { flex-direction: column; justify-content: flex-start; padding-top: 2px; line-height: 17px; }
.big svg { margin-bottom: 3px; }
.big .caret { margin-top: 4px; }
.col { display: flex; flex-direction: column; }
.small { justify-content: flex-start; height: 24px; padding: 0 3px; box-sizing: border-box; gap: 5px; }
.small .caret { margin-left: 2px; }
.small.far .caret { margin-left: 6px; }
.small.on { padding: 0 2px; border: 1px solid #6cb6f0; background: #45566b; }
.fill { flex: 1; min-width: 0; padding-right: 2px; }
.combo { display: flex; align-items: center; height: 22px; margin-bottom: 2px; box-sizing: border-box; border: 1px solid #272e39; background: #4d586b; padding: 0 2px 0 4px; gap: 2px; }
.combo select { flex: 1; min-width: 0; appearance: none; border: 0; background: none; color: #f1f1f1; font: inherit; padding: 0; }
.swatch { width: 14px; height: 14px; margin: 0 9px 0 8px; border: 1px solid #c8bfa8; background: #fff; }
.small-sw { width: 12px; height: 12px; margin: 0 3px; border-color: #000; }
.rule { width: 64px; height: 1px; margin-left: -1px; background: #eee; }
.tools { display: flex; height: 24px; gap: 8px; padding-left: 4px; }
.named { gap: 5px; }
.caption { position: relative; display: flex; align-items: center; justify-content: center; gap: 6px; height: 20px; }
.launchable { padding-right: 12px; }
.launcher { position: absolute; right: 3px; }

.doc-tabs { display: flex; align-items: flex-end; height: 26px; margin: 0 3px; padding-left: 16px; border-bottom: 4px solid #3b4453; }
.doc { display: flex; align-items: center; justify-content: space-between; width: 134px; height: 22px; padding: 2px 18px 0 16px; box-sizing: border-box; background: #2e3542; color: #c3c6ca; clip-path: polygon(0 100%, 4px 92%, 8px 25%, 11px 4px, 15px 0, calc(100% - 15px) 0, calc(100% - 11px) 4px, calc(100% - 8px) 25%, calc(100% - 4px) 92%, 100% 100%); }
.doc + .doc { margin-left: -10px; }
.current { background: #3b4453; color: #fff; font-weight: 700; }
.doc-tabs .add { width: 21px; height: 14px; margin: 0 0 3px 2px; border-radius: 0 10px 2px 6px; background: #323a47; }

.canvas { position: relative; flex: 1; min-height: 640px; background: #212830; overflow: hidden; }
.viewport-label { padding: 5px 7px; color: #f0f0f0; }
.drawing { position: absolute; left: 0; top: 0; }
.cube { position: absolute; top: 46px; right: 26px; width: 120px; height: 120px; box-sizing: border-box; border: 13px solid #42484f; border-radius: 50%; }
.cube span { position: absolute; font: 18px/18px "Noto Sans CJK SC", sans-serif; color: #b9bbbd; }
.cube .n { left: 38px; top: -19px; }
.cube .s { left: 38px; bottom: -19px; }
.cube .w { left: -19px; top: 38px; }
.cube .e { right: -19px; top: 38px; }
.face { position: absolute; left: 21px; top: 21px; width: 52px; height: 52px; box-sizing: border-box; padding: 9px; border: 1px solid #777a7c; background: #afb0b2; }
.face b { display: block; font: 30px/30px "Noto Sans CJK SC", serif; text-align: center; background: #a3a9ae; color: #596066; }
.wcs { position: absolute; top: 193px; right: 62px; width: 48px; height: 18px; gap: 5px; border: 1px solid #72758a; border-radius: 4px; background: #9b9dab; color: #55586a; font: 11px/14px "Liberation Sans", sans-serif; }
.navbar { position: absolute; top: 236px; right: 7px; }
.ucs { position: absolute; left: 19px; bottom: 16px; overflow: visible; }
.ucs text { fill: #fff; font: 300 18px/18px "Lato", sans-serif; }

.command { position: absolute; left: 389px; right: 389px; bottom: 0; }
.history { display: flex; flex-direction: column; align-items: flex-start; gap: 5px; margin: 0 62px 4px; }
.history p { height: 15px; padding: 0 2px; border-radius: 2px; background: #515457; font: 13px/15px "Noto Sans CJK SC", sans-serif; color: #f2f2f2; white-space: pre; }
.history .age0 { color: #b5b6b8; background: #4b4e51; }
.history .age1 { color: #d5d6d7; }
.half { font: 12px/15px "Liberation Mono", monospace; }
.cmdline { display: flex; height: 27px; }
.handle { display: flex; align-items: center; gap: 7px; width: 56px; padding: 0 6px 0 4px; box-sizing: border-box; border-radius: 3px 0 0 3px; background: #2a303c; }
.tool { margin-left: auto; }
.entry { flex: 1; display: flex; align-items: center; height: 25px; margin-top: 1px; padding: 0 4px; border-radius: 2px; background: #bbbcbe; }
.entry .wide { margin: 0 7px 0 2px; border-top-color: #444; }
.entry input { flex: 1; min-width: 0; padding: 0; border: 0; background: none; color: #222; font: italic 13px/16px "Noto Sans CJK SC", sans-serif; }
.entry input::placeholder { color: #55575a; opacity: 1; }

.bottom { display: flex; justify-content: space-between; height: 31px; margin-left: 3px; border-top: 1px solid #3b4350; }
.layouts { display: flex; padding-left: 9px; color: #b9bcc1; }
.layouts button { width: 52px; height: 18px; background: #2e3542; clip-path: polygon(0 0, 100% 0, calc(100% - 4px) 60%, calc(100% - 9px) 100%, 9px 100%, 4px 60%); }
.layouts .active { background: #3b4453; color: #fff; font-weight: 700; }
.layouts .add { width: 22px; height: 15px; margin-left: 5px; clip-path: none; border-radius: 0 0 8px 2px; }
.status { display: flex; gap: 3px; padding: 1px 6px 0 0; }
.sgroup { display: flex; gap: 1px; height: 24px; }
.sgroup button { justify-content: flex-start; background: #3b4453; color: #f0f1f2; }
.cell { display: flex; align-items: center; justify-content: center; flex: 1; height: 22px; }
.cell.fixed { flex: 0 0 24px; }
.cell.on { background: #5b8cc0; }
.sgroup .caret { margin-left: 4px; }
.stext { flex: 1; padding: 0 3px; text-align: center; font-family: Roboto, "Noto Sans CJK SC", sans-serif; }
.sgroup:first-child .stext { text-align: right; padding-right: 6px; }

.ime { position: absolute; left: 1045px; bottom: 13px; padding: 3px 4px 5px; background: #000; }
.ime div { display: flex; align-items: center; justify-content: center; gap: 4px; width: 60px; height: 25px; border-radius: 5px; background: #fff; color: #222; font: 13px/16px Roboto, "Noto Sans CJK SC", sans-serif; }
.ime span:last-child { font-size: 12px; }
.watermark { position: absolute; right: 0; bottom: 0; display: flex; width: 473px; height: 114px; background: rgba(255, 255, 255, .6); }
.site { width: 276px; padding-left: 10px; box-sizing: border-box; }
.site strong { display: block; font: 700 50px/60px "Noto Sans CJK SC", sans-serif; color: #db0a0d; text-shadow: 0 0 2px #fff; white-space: nowrap; }
.site a { display: block; margin-top: 6px; font: 38px/46px "Liberation Serif", serif; color: #0b59de; -webkit-text-stroke: 1px #0b59de; text-decoration: none; }
.badge { width: 190px; border-radius: 26px; background: rgba(0, 84, 220, .95); color: #d6d8db; font: 600 94px/112px "Noto Sans", sans-serif; text-align: center; }
.taskbar { height: 4px; background: #3f3c3d; }
.taskbar span { display: block; width: 160px; height: 4px; margin-left: 582px; background: #6b6b6b; }
</style>
